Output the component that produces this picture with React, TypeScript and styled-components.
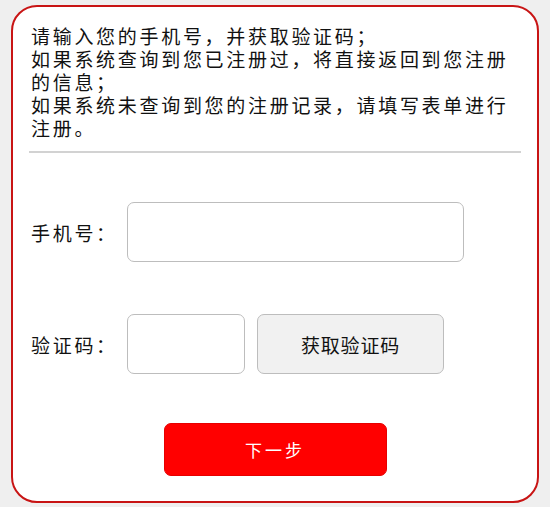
import styled, { createGlobalStyle } from "styled-components";

const GlobalStyle = createGlobalStyle`
  html, body {
    margin: 0;
    padding: 0;
    background: #efefef;
  }
  body {
    font-family: "Noto Sans CJK SC", "Noto Sans", sans-serif;
    color: #111;
  }
  * {
    box-sizing: border-box;
  }
`;

const Card = styled.div`
  margin: 5px 11px 0;
  width: 528px;
  background: #fff;
  border: 2px solid #c81414;
  border-radius: 26px;
  padding: 17px 16px 25px;
`;

const Intro = styled.div`
  padding: 0 2px;
  font-size: 19px;
  line-height: 23px;
  letter-spacing: 2.7px;
  color: #111;
  p {
    margin: 0;
  }
`;

const Divider = styled.hr`
  margin: 12px 0 0;
  border: none;
  height: 2px;
  background: #d2d2d2;
`;

const Row = styled.div<{ $gap: number }>`
  display: flex;
  align-items: center;
  margin-top: ${(p) => p.$gap}px;
  padding-left: 2px;
`;

const Label = styled.label`
  width: 96px;
  flex-shrink: 0;
  font-size: 19px;
  letter-spacing: 2.7px;
  color: #111;
`;

const Input = styled.input<{ $width: number }>`
  width: ${(p) => p.$width}px;
  height: 60px;
  border: 1.5px solid #bdbdbd;
  border-radius: 7px;
  background: #fff;
  font-size: 18px;
  padding: 0 10px;
  outline: none;
`;

const CodeButton = styled.button`
  margin-left: 12px;
  width: 187px;
  height: 60px;
  border: 1.5px solid #bdbdbd;
  border-radius: 7px;
  background: #f1f1f1;
  font-family: inherit;
  font-size: 19px;
  letter-spacing: 0.8px;
  color: #111;
  cursor: pointer;
`;

const Footer = styled.div`
  display: flex;
  justify-content: center;
  margin-top: 49px;
`;

const NextButton = styled.button`
  width: 223px;
  height: 53px;
  border: 1px solid #e60000;
  border-radius: 7px;
  background: #ff0000;
  color: #fff;
  font-family: inherit;
  font-size: 17px;
  letter-spacing: 3px;
  cursor: pointer;
`;

export default function App() {
  return (
    <>
      <GlobalStyle />
      <Card>
        <Intro>
          <p>请输入您的手机号，并获取验证码；</p>
          <p>如果系统查询到您已注册过，将直接返回到您注册的信息；</p>
          <p>如果系统未查询到您的注册记录，请填写表单进行注册。</p>
        </Intro>
        <Divider />
        <Row $gap={49}>
          <Label>手机号：</Label>
          <Input $width={337} type="tel" />
        </Row>
        <Row $gap={52}>
          <Label>验证码：</Label>
          <Input $width={118} type="text" />
          <CodeButton>获取验证码</CodeButton>
        </Row>
        <Footer>
          <NextButton>下一步</NextButton>
        </Footer>
      </Card>
    </>
  );
}
